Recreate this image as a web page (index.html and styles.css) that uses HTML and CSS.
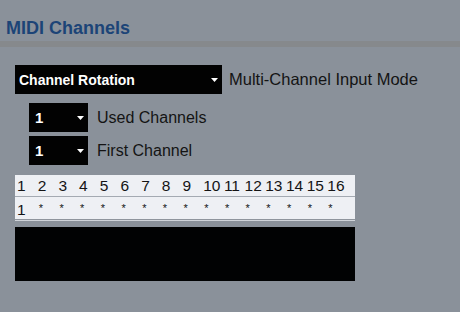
FILE: index.html
```html
<!DOCTYPE html>
<html lang="en">
<head>
  <meta charset="UTF-8" />
  <title>MIDI Channels</title>
  <link rel="stylesheet" href="styles.css">
</head>
<body>
  <header class="panel-header">
    <h1>MIDI Channels</h1>
  </header>

  <div class="panel-body">
    <div class="mode-row">
      <div class="dropdown dropdown-wide">
        <span>Channel Rotation</span>
        <svg class="caret" width="7" height="4" viewBox="0 0 7 4"><path d="M0 0 H7 L3.5 4 Z" fill="#fff"/></svg>
      </div>
      <label class="mode-label">Multi-Channel Input Mode</label>
    </div>

    <div class="sub-options">
      <div class="option-row">
        <div class="dropdown dropdown-small">
          <span>1</span>
          <svg class="caret" width="7" height="4" viewBox="0 0 7 4"><path d="M0 0 H7 L3.5 4 Z" fill="#fff"/></svg>
        </div>
        <label>Used Channels</label>
      </div>
      <div class="option-row">
        <div class="dropdown dropdown-small">
          <span>1</span>
          <svg class="caret" width="7" height="4" viewBox="0 0 7 4"><path d="M0 0 H7 L3.5 4 Z" fill="#fff"/></svg>
        </div>
        <label>First Channel</label>
      </div>
    </div>

    <div class="channel-table">
      <div class="channel-row numbers" id="numbers"></div>
      <div class="channel-row marks" id="marks"></div>
    </div>

    <div class="monitor"></div>
  </div>

  <script>
    var numbers = document.getElementById("numbers");
    var marks = document.getElementById("marks");
    for (var i = 1; i <= 16; i++) {
      var n = document.createElement("span");
      n.textContent = i;
      numbers.appendChild(n);

      var m = document.createElement("span");
      m.textContent = i === 1 ? "1" : "*";
      if (i !== 1) m.className = "star";
      marks.appendChild(m);
    }
  </script>
</body>
</html>
```

FILE: styles.css
```css
* {
  margin: 0;
  padding: 0;
  box-sizing: border-box;
}

body {
  background-color: #8a919a;
  font-family: 'Liberation Sans', Arial, sans-serif;
  color: #141414;
  width: 460px;
  height: 312px;
  overflow: hidden;
}

.panel-header {
  height: 47px;
  padding: 18px 0 0 6px;
  border-bottom: 6px solid #86898c;
}

.panel-header h1 {
  font-size: 18px;
  line-height: 20px;
  font-weight: bold;
  color: #1c4477;
}

.panel-body {
  padding: 18px 0 0 15px;
}

.mode-row {
  display: flex;
  align-items: center;
  gap: 7px;
}

.mode-label {
  font-size: 16.5px;
}

.dropdown {
  background-color: #020202;
  color: #ffffff;
  font-weight: bold;
  font-size: 14px;
  height: 29px;
  display: flex;
  align-items: center;
  justify-content: space-between;
}

.dropdown-wide {
  width: 207px;
  padding: 0 4px 0 4px;
}

.dropdown-small {
  width: 59px;
  padding: 0 4px 0 6px;
  font-size: 15px;
}

.caret {
  margin-top: 1px;
}

.sub-options {
  margin: 9px 0 0 14px;
  display: flex;
  flex-direction: column;
  gap: 4px;
}

.option-row {
  display: flex;
  align-items: center;
  gap: 9px;
  font-size: 16px;
}

.channel-table {
  margin-top: 10px;
  width: 340px;
  background-color: #eef0f4;
  border-bottom: 1px solid #8f959d;
  box-shadow: 0 1px 0 #cfd3d9;
}

.channel-row {
  display: grid;
  grid-template-columns: repeat(16, 20.7px);
  padding-left: 2px;
  align-items: center;
}

.numbers {
  height: 22px;
  font-size: 15.5px;
  border-bottom: 1px solid #a4aab2;
  padding-top: 1px;
}

.marks {
  height: 22px;
  font-size: 15.5px;
  padding-top: 3px;
}

.star {
  font-size: 11px;
  padding-left: 1px;
  margin-top: -3px;
}

.monitor {
  margin-top: 7px;
  width: 340px;
  height: 54px;
  background-color: #010203;
}
```
